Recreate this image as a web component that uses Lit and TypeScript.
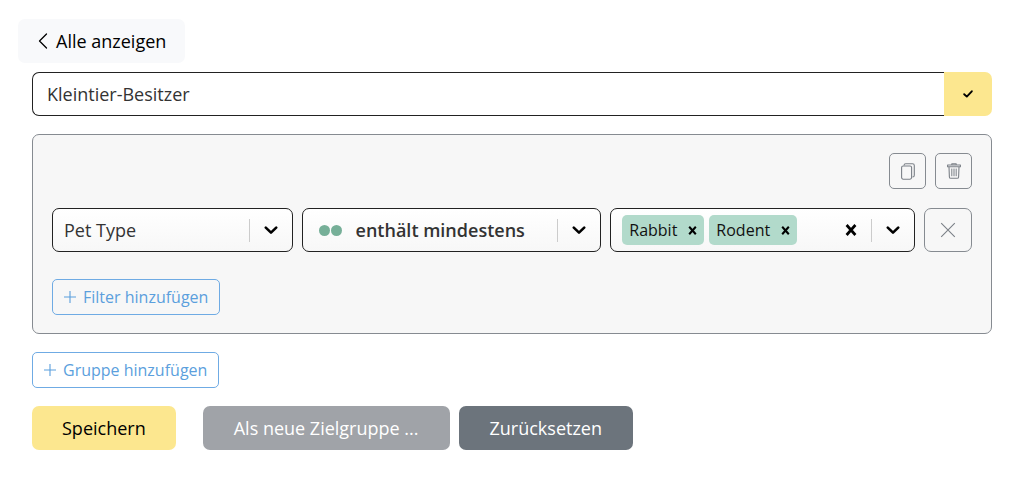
import { LitElement, html, css, svg } from "lit";
import { customElement, state } from "lit/decorators.js";

const icon = (w: number, h: number, box: string, body: unknown, cls = "") => html`
  <svg class="icon ${cls}" width=${w} height=${h} viewBox=${box} fill="none" stroke="currentColor" aria-hidden="true">${body}</svg>`;

const chevronLeft = () => icon(10, 16, "0 0 10 16", svg`<path d="M8.5 1 1.5 8l7 7" stroke-width="1.3" stroke-linecap="round" stroke-linejoin="round"/>`);
const chevronDown = () => icon(14, 9, "0 0 14 9", svg`<path d="M1.8 1.6 7 6.6l5.2-5" stroke-width="2.6" stroke-linecap="round" stroke-linejoin="round"/>`);
const check = () => icon(10, 8, "0 0 10 8", svg`<path d="M1.2 4.2 3.8 6.6 8.8 1.3" stroke-width="1.9" stroke-linecap="round" stroke-linejoin="round"/>`);
const cross = (size: number) => icon(size, size, "0 0 12 12", svg`<path d="M1.6 1 10.4 11M10.4 1 1.6 11" stroke-width="2.7"/>`);
const thinCross = () => icon(16, 16, "0 0 16 16", svg`<path d="M1.2 1.2 14.8 14.8M14.8 1.2 1.2 14.8" stroke-width="1.1"/>`);
const plus = () => icon(12, 12, "0 0 12 12", svg`<path d="M6 0v12M0 6h12" stroke-width="1.1"/>`);
const copy = () => icon(14, 17, "0 0 14 17", svg`
  <rect x=".6" y="3" width="10" height="13.2" rx="1.6" stroke-width="1.1"/>
  <path d="M3 2.6C3 1.5 3.6.8 4.7.8h6.8c1 0 1.8.8 1.8 1.8v9.6c0 1-.7 1.7-1.8 1.8" stroke-width="1.1"/>`);
const trash = () => icon(14, 16, "0 0 14 16", svg`
  <path d="M.6 2h12.8v1.8H.6zM4.8 1.9V.7h4.4v1.2M2 3.9l.4 10c0 .9.6 1.4 1.5 1.4h6.2c.9 0 1.5-.5 1.5-1.4l.4-10" stroke-width="1.1" stroke-linejoin="round"/>
  <path d="M4.8 5.6v7.6M7 5.6v7.6M9.2 5.6v7.6" stroke-width="1"/>`);

@customElement("app-root")
export class AppRoot extends LitElement {
  @state() private tags = ["Rabbit", "Rodent"];

  static styles = css`
    :host {
      display: block;
      box-sizing: border-box;
      padding: 19px 32px 32px;
      background: #fff;
      color: #333;
      font: 18px/26px "Open Sans", "Noto Sans", sans-serif;
    }
    *, *::before, *::after { box-sizing: border-box; }
    button, input, select { font: inherit; color: inherit; margin: 0; }
    button { cursor: pointer; }
    .icon { display: block; flex: none; }
    .page { display: flex; flex-direction: column; align-items: flex-start; gap: 18px; }
    .head { align-self: stretch; display: flex; flex-direction: column; align-items: flex-start; gap: 9px; }
    .back {
      display: flex; align-items: center; gap: 8px;
      height: 44px; padding: 0 19px 0 20px; margin-left: -14px;
      border-radius: 7px; background: #f8f9fb; color: #000; text-decoration: none;
    }
    .name { display: flex; align-self: stretch; height: 44px; }
    .name-input {
      flex: 1; min-width: 0; padding: 0 14px;
      border: 1px solid #222; border-right: 0; border-radius: 7px 0 0 7px;
      background: #fff; outline: none;
    }
    .name-ok {
      display: grid; place-items: center; width: 48px; padding: 0;
      border: 0; border-radius: 0 7px 7px 0; background: #fce78f; color: #000;
    }
    .group {
      align-self: stretch; display: flex; flex-direction: column;
      padding: 18px 19px; border: 1px solid #868b91; border-radius: 7px; background: #f7f7f7;
    }
    .tools { display: flex; justify-content: flex-end; gap: 9px; }
    .square {
      display: grid; place-items: center; width: 37px; height: 36px; padding: 0;
      border: 1px solid #868b91; border-radius: 5px; background: transparent; color: #7b8087;
    }
    .square.large { width: 48px; height: 44px; border-radius: 7px; }
    .row {
      display: grid; grid-template-columns: 240fr 299fr 304fr 48px; gap: 9px;
      margin: 19px 0 27px;
    }
    .field {
      display: grid; grid-template-columns: minmax(0, 1fr) 43px; align-items: center;
      height: 44px; border: 1px solid #222; border-radius: 7px;
      background: linear-gradient(#fff, #f7f7f7);
    }
    .field > select {
      grid-area: 1 / 1 / 2 / 3; width: 100%; height: 42px; padding: 0 48px 0 11px;
      appearance: none; border: 0; background: none; outline: none;
    }
    .field > .strong { padding-left: 53px; font-weight: 600; }
    .dots {
      grid-area: 1 / 1 / 2 / 2; display: flex; gap: 1px; padding-left: 16px; pointer-events: none;
    }
    .dot { width: 11px; height: 11px; border-radius: 50%; background: #76af98; }
    .arrow {
      grid-area: 1 / 2 / 2 / 3; display: grid; place-items: center;
      height: 23px; padding: 0; border: 0; border-left: 1px solid #ccc;
      background: none; color: #000; pointer-events: none;
    }
    .arrow.active { pointer-events: auto; }
    .values { display: flex; align-items: center; gap: 5px; padding-left: 11px; }
    .tag {
      display: flex; align-items: center; gap: 11px; height: 30px; padding: 0 7px;
      border-radius: 5px; background: #b2dacb; color: #111; font-size: 16px; line-height: 22px;
    }
    .plain { display: grid; place-items: center; padding: 0; border: 0; background: none; color: #000; }
    .query { flex: 1; min-width: 0; width: 0; padding: 0; border: 0; background: none; outline: none; }
    .clear { margin-right: 14px; }
    .add {
      display: flex; align-items: center; align-self: flex-start; gap: 7px;
      height: 36px; padding: 0 11px;
      border: 1px solid #6fabe4; border-radius: 5px; background: transparent;
      color: #5b9fdd; font-size: 16px; line-height: 22px;
    }
    .actions { display: flex; flex-wrap: wrap; gap: 9px; }
    .action { height: 44px; padding: 0 31px; border: 0; border-radius: 7px; color: #fff; background: #6c747c; }
    .save { padding: 0 30px; margin-right: 18px; background: #fce78f; color: #000; }
    .action:disabled { background: #a0a3a8; cursor: default; }
  `;

  private remove(tag: string) {
    this.tags = this.tags.filter((t) => t !== tag);
  }

  render() {
    return html`
      <main class="page">
        <div class="head">
          <a class="back" href="#">${chevronLeft()}<span>Alle anzeigen</span></a>
          <div class="name">
            <input class="name-input" type="text" aria-label="Name der Zielgruppe" .value=${"Kleintier-Besitzer"} />
            <button class="name-ok" aria-label="Name übernehmen">${check()}</button>
          </div>
        </div>
        <section class="group" aria-label="Filtergruppe">
          <div class="tools">
            <button class="square" aria-label="Gruppe kopieren">${copy()}</button>
            <button class="square" aria-label="Gruppe löschen">${trash()}</button>
          </div>
          <div class="row">
            <div class="field">
              <select aria-label="Merkmal"><option>Pet Type</option></select>
              <span class="arrow">${chevronDown()}</span>
            </div>
            <div class="field">
              <select class="strong" aria-label="Bedingung"><option>enthält mindestens</option></select>
              <span class="dots"><span class="dot"></span><span class="dot"></span></span>
              <span class="arrow">${chevronDown()}</span>
            </div>
            <div class="field">
              <div class="values">
                ${this.tags.map((tag) => html`
                  <span class="tag">${tag}
                    <button class="plain" aria-label="${tag} entfernen" @click=${() => this.remove(tag)}>${cross(9)}</button>
                  </span>`)}
                <input class="query" type="text" aria-label="Werte" />
                <button class="plain clear" aria-label="Alle Werte entfernen" @click=${() => (this.tags = [])}>${cross(12)}</button>
              </div>
              <button class="arrow active" aria-label="Werte anzeigen">${chevronDown()}</button>
            </div>
            <button class="square large" aria-label="Filter entfernen">${thinCross()}</button>
          </div>
          <button class="add">${plus()}<span>Filter hinzufügen</span></button>
        </section>
        <button class="add">${plus()}<span>Gruppe hinzufügen</span></button>
        <div class="actions">
          <button class="action save">Speichern</button>
          <button class="action" disabled>Als neue Zielgruppe ...</button>
          <button class="action">Zurücksetzen</button>
        </div>
      </main>`;
  }
}
